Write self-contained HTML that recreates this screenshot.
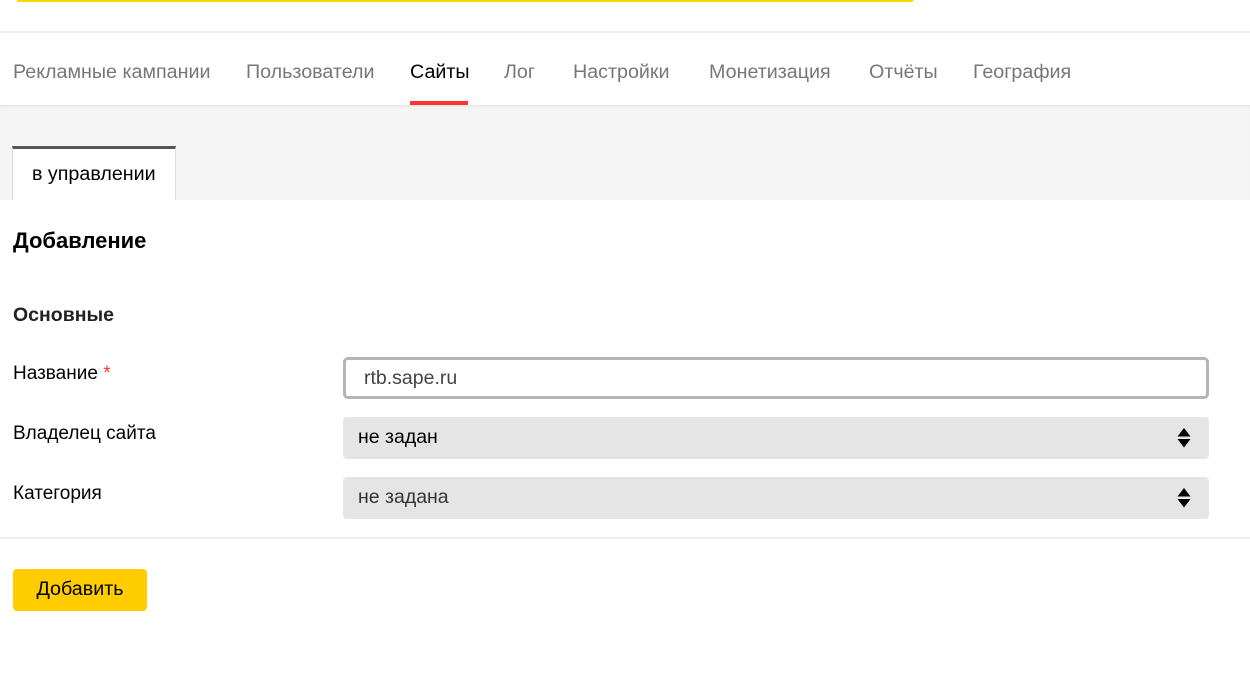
<!DOCTYPE html>
<html><head><meta charset="utf-8"><style>
body{margin:0;width:1250px;height:696px;background:#fff;font-family:"Liberation Sans",sans-serif;position:relative;overflow:hidden}
.a{position:absolute}
.nav span{position:absolute;top:61px;font-size:19.7px;color:#777;white-space:nowrap}
.lbl{position:absolute;left:13px;font-size:19px;color:#000}
.sel{position:absolute;left:343px;width:866px;height:42px;background:#e5e5e5;border-radius:4px}
.sel span{position:absolute;left:15px;top:9px;font-size:19.5px}
</style></head><body>
<div class="a" style="left:17px;top:0;width:896px;height:2px;background:#ffd600"></div>
<div class="a" style="left:0;top:31px;width:1250px;height:2px;background:#f0f0f0"></div>
<div class="a" style="left:0;top:105px;width:1250px;height:95px;background:#f5f5f5;box-shadow:inset 0 3px 3px -2px #ddd"></div>
<div class="nav">
<span style="left:13px">Рекламные кампании</span>
<span style="left:246px">Пользователи</span>
<span style="left:410px;color:#000">Сайты</span>
<span style="left:504px">Лог</span>
<span style="left:573px">Настройки</span>
<span style="left:709px">Монетизация</span>
<span style="left:869px">Отчёты</span>
<span style="left:973px">География</span>
</div>
<div class="a" style="left:410px;top:101px;width:58px;height:4px;background:#f33"></div>
<div class="a" style="left:12px;top:146px;width:164px;height:54px;background:#fff;border-left:1px solid #ddd;border-right:1px solid #ddd;border-top:3px solid #555;box-sizing:border-box"></div>
<div class="a" style="left:32px;top:163px;font-size:19.7px">в управлении</div>
<div class="a" style="left:13px;top:228px;font-size:22px;font-weight:bold">Добавление</div>
<div class="a" style="left:13px;top:304px;font-size:19.5px;font-weight:bold;color:#222">Основные</div>
<div class="lbl" style="top:363px">Название <span style="color:#f33">*</span></div>
<div class="lbl" style="top:423px">Владелец сайта</div>
<div class="lbl" style="top:483px">Категория</div>
<div class="a" style="left:343px;top:357px;width:866px;height:42px;border:3px solid #b5b5b5;border-radius:5px;box-sizing:border-box"></div>
<div class="a" style="left:364px;top:367px;font-size:19.5px;color:#444">rtb.sape.ru</div>
<div class="sel" style="top:417px"><span>не задан</span>
<svg class="a" style="right:18px;top:11px" width="14" height="20" viewBox="0 0 14 20"><path d="M7 0L13.5 8.5H0.5Z M0.5 11H13.5L7 19.5Z" fill="#000"/></svg></div>
<div class="sel" style="top:477px"><span style="color:#333">не задана</span>
<svg class="a" style="right:18px;top:11px" width="14" height="20" viewBox="0 0 14 20"><path d="M7 0L13.5 8.5H0.5Z M0.5 11H13.5L7 19.5Z" fill="#000"/></svg></div>
<div class="a" style="left:0;top:537px;width:1250px;height:2px;background:#f0f0f0"></div>
<div class="a" style="left:13px;top:569px;width:134px;height:42px;background:#ffcc00;border-radius:4px;font-size:19.7px;line-height:41px;text-align:center">Добавить</div>
</body></html>
